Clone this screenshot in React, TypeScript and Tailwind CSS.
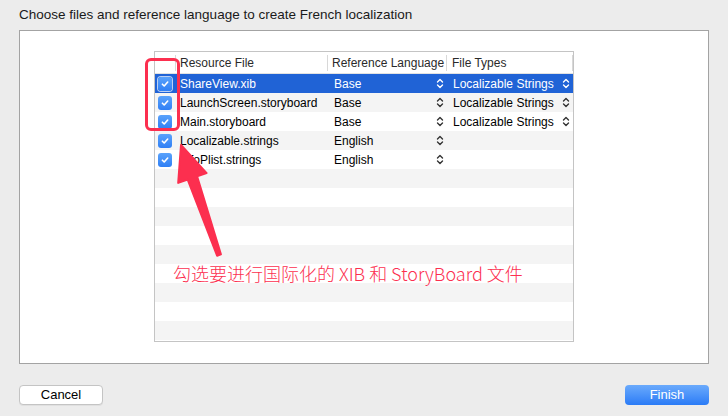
type Row = { name: string; lang: string; type?: string };

const rows: Row[] = [
  { name: 'ShareView.xib', lang: 'Base', type: 'Localizable Strings' },
  { name: 'LaunchScreen.storyboard', lang: 'Base', type: 'Localizable Strings' },
  { name: 'Main.storyboard', lang: 'Base', type: 'Localizable Strings' },
  { name: 'Localizable.strings', lang: 'English' },
  { name: 'InfoPlist.strings', lang: 'English' },
];

function Chevrons() {
  return (
    <svg width="8" height="11" viewBox="0 0 8 11" fill="none" stroke="currentColor" strokeWidth="1.4" strokeLinecap="round" strokeLinejoin="round">
      <path d="M1.5 4 L4 1.5 L6.5 4" />
      <path d="M1.5 7 L4 9.5 L6.5 7" />
    </svg>
  );
}

function Check({ selected }: { selected?: boolean }) {
  return (
    <div
      className={`flex h-[14px] w-[14px] items-center justify-center rounded-[3px] bg-gradient-to-b from-[#5aa2fb] to-[#2f7ff5] ${
        selected ? 'ring-1 ring-white/70' : ''
      }`}
    >
      <svg width="10" height="10" viewBox="0 0 10 10" fill="none" stroke="white" strokeWidth="1.6" strokeLinecap="round" strokeLinejoin="round">
        <path d="M2.4 5.2 L4.2 7 L7.7 3" />
      </svg>
    </div>
  );
}

export default function App() {
  const empty = Array.from({ length: 14 - rows.length });

  return (
    <div className="relative h-[416px] w-[728px] overflow-hidden bg-[#ececec] font-['Liberation_Sans',Arial,sans-serif] text-black">
      <div className="pl-[19px] pt-[6px] text-[13.5px] leading-[18px] text-[#1a1a1a]">
        Choose files and reference language to create French localization
      </div>

      <div className="mx-[19px] mt-[6px] h-[334px] border border-[#a3a3a3] bg-white pl-[134px] pt-[20px]">
        <div className="w-[420px] border border-[#c4c4c4] text-[12px]">
          {/* header */}
          <div className="flex h-[22px] items-center border-b border-[#e2e2e2] text-[#2a2a2a]">
            <div className="h-[16px] w-[21px] border-r border-[#d8d8d8]" />
            <div className="flex h-[16px] w-[152px] items-center border-r border-[#d8d8d8] pl-[4px]">Resource File</div>
            <div className="flex h-[16px] w-[119px] items-center border-r border-[#d8d8d8] pl-[4px]">Reference Language</div>
            <div className="flex h-[16px] flex-1 items-center border-r border-[#d8d8d8] pl-[5px]">File Types</div>
          </div>

          {rows.map((r, i) => {
            const sel = i === 0;
            return (
              <div
                key={r.name}
                className={`flex h-[19px] items-center ${
                  sel ? 'bg-[#2063d6] text-white' : i % 2 === 1 ? 'bg-[#f4f4f4]' : 'bg-white'
                }`}
              >
                <div className="w-[21px] pl-[3px]">
                  <Check selected={sel} />
                </div>
                <div className="w-[152px] pl-[4px]">{r.name}</div>
                <div className={`flex w-[119px] items-center justify-between pl-[6px] pr-[3px] ${sel ? 'text-white' : 'text-[#333]'}`}>
                  <span className={sel ? 'text-white' : 'text-black'}>{r.lang}</span>
                  <Chevrons />
                </div>
                {r.type && (
                  <div className={`flex flex-1 items-center justify-between pl-[6px] pr-[3px] ${sel ? 'text-white' : 'text-[#333]'}`}>
                    <span className={sel ? 'text-white' : 'text-black'}>{r.type}</span>
                    <Chevrons />
                  </div>
                )}
              </div>
            );
          })}

          {empty.map((_, j) => {
            const i = j + rows.length;
            return <div key={i} className={`h-[19px] ${i % 2 === 1 ? 'bg-[#f4f4f4]' : 'bg-white'}`} />;
          })}
          <div className="h-[1px] bg-white" />
        </div>
      </div>

      <div className="mt-[21px] flex justify-between px-[19px]">
        <button className="h-[20px] w-[84px] rounded-[4px] border border-[#c4c4c4] bg-white text-[13px] leading-[18px] text-black shadow-[0_1px_0_rgba(0,0,0,0.05)]">
          Cancel
        </button>
        <button className="h-[20px] w-[84px] rounded-[4px] bg-gradient-to-b from-[#6aaafc] to-[#2a7bf6] text-[13px] leading-[20px] text-white">
          Finish
        </button>
      </div>

      {/* annotation overlay */}
      <div className="absolute left-[145px] top-[58px] h-[73px] w-[35px] rounded-[6px] border-[3px] border-[#fc2f4f]" />
      <svg className="absolute left-0 top-0" width="728" height="416" viewBox="0 0 728 416">
        <polygon
          points="181,145 206.6,173.1 197.1,176.4 220.9,254.3 217.1,255.7 187.7,179.6 178.2,182.9"
          fill="#fc2f4f"
          stroke="#fc2f4f"
          strokeWidth="2"
          strokeLinejoin="round"
        />
      </svg>
      <div className="absolute left-[173px] top-[261px] font-['Noto_Sans_CJK_SC','Liberation_Sans',sans-serif] text-[18px] leading-[25px] font-light text-[#fc2f4f]">
        勾选要进行国际化的 XIB 和 StoryBoard 文件
      </div>
    </div>
  );
}
